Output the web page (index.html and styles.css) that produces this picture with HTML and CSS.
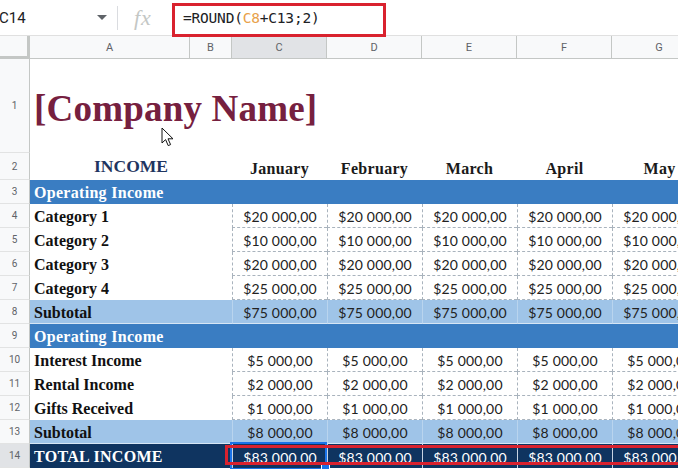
FILE: index.html
```html
<!DOCTYPE html>
<html>
<head>
<meta charset="utf-8">
<link rel="stylesheet" href="styles.css">
</head>
<body>
<div class="app">
  <div class="fbar">
    <div class="namebox"><span class="nb-text">C14</span><svg class="caret" width="10" height="6" viewBox="0 0 10 6"><path d="M0 0h10L5 5z" fill="#5f6368"/></svg></div>
    <div class="sep"></div>
    <div class="fx">fx</div>
    <div class="formula">=ROUND(<span class="ref">C8</span>+C13;2)</div>
  </div>
  <div class="sheet">
    <!-- header row -->
    <div class="corner"></div>
    <div class="ch">A</div><div class="ch">B</div><div class="ch ch-sel">C</div><div class="ch">D</div><div class="ch">E</div><div class="ch">F</div><div class="ch">G</div>
    <!-- row 1 -->
    <div class="rh">1</div>
    <div class="title">[Company Name]</div>
    <!-- row 2 -->
    <div class="rh">2</div>
    <div class="income">INCOME</div>
    <div class="month">January</div><div class="month">February</div><div class="month">March</div><div class="month">April</div><div class="month">May</div>
    <!-- row 3 -->
    <div class="rh">3</div>
    <div class="section">Operating Income</div>
    <!-- row 4 -->
    <div class="rh">4</div>
    <div class="lbl">Category 1</div><div class="blank"></div>
    <div class="num">$20 000,00</div><div class="num">$20 000,00</div><div class="num">$20 000,00</div><div class="num">$20 000,00</div><div class="num">$20 000,00</div>
    <!-- row 5 -->
    <div class="rh">5</div>
    <div class="lbl">Category 2</div><div class="blank"></div>
    <div class="num">$10 000,00</div><div class="num">$10 000,00</div><div class="num">$10 000,00</div><div class="num">$10 000,00</div><div class="num">$10 000,00</div>
    <!-- row 6 -->
    <div class="rh">6</div>
    <div class="lbl">Category 3</div><div class="blank"></div>
    <div class="num">$20 000,00</div><div class="num">$20 000,00</div><div class="num">$20 000,00</div><div class="num">$20 000,00</div><div class="num">$20 000,00</div>
    <!-- row 7 -->
    <div class="rh">7</div>
    <div class="lbl">Category 4</div><div class="blank"></div>
    <div class="num">$25 000,00</div><div class="num">$25 000,00</div><div class="num">$25 000,00</div><div class="num">$25 000,00</div><div class="num">$25 000,00</div>
    <!-- row 8 -->
    <div class="rh">8</div>
    <div class="lbl sub">Subtotal</div><div class="blank sub"></div>
    <div class="num sub">$75 000,00</div><div class="num sub">$75 000,00</div><div class="num sub">$75 000,00</div><div class="num sub">$75 000,00</div><div class="num sub">$75 000,00</div>
    <!-- row 9 -->
    <div class="rh">9</div>
    <div class="section">Operating Income</div>
    <!-- row 10 -->
    <div class="rh">10</div>
    <div class="lbl">Interest Income</div><div class="blank"></div>
    <div class="num">$5 000,00</div><div class="num">$5 000,00</div><div class="num">$5 000,00</div><div class="num">$5 000,00</div><div class="num">$5 000,00</div>
    <!-- row 11 -->
    <div class="rh">11</div>
    <div class="lbl">Rental Income</div><div class="blank"></div>
    <div class="num">$2 000,00</div><div class="num">$2 000,00</div><div class="num">$2 000,00</div><div class="num">$2 000,00</div><div class="num">$2 000,00</div>
    <!-- row 12 -->
    <div class="rh">12</div>
    <div class="lbl">Gifts Received</div><div class="blank"></div>
    <div class="num">$1 000,00</div><div class="num">$1 000,00</div><div class="num">$1 000,00</div><div class="num">$1 000,00</div><div class="num">$1 000,00</div>
    <!-- row 13 -->
    <div class="rh">13</div>
    <div class="lbl sub">Subtotal</div><div class="blank sub"></div>
    <div class="num sub">$8 000,00</div><div class="num sub">$8 000,00</div><div class="num sub">$8 000,00</div><div class="num sub">$8 000,00</div><div class="num sub">$8 000,00</div>
    <!-- row 14 -->
    <div class="rh rh-sel">14</div>
    <div class="lbl total">TOTAL INCOME</div><div class="blank total"></div>
    <div class="num total">$83 000,00</div><div class="num total">$83 000,00</div><div class="num total">$83 000,00</div><div class="num total">$83 000,00</div><div class="num total">$83 000,00</div>
  </div>

  <div class="mark mark-formula"></div>
  <div class="selection"></div>
  <div class="handle"></div>
  <div class="mark mark-total"></div>
  <svg class="cursor" width="13" height="20" viewBox="0 0 13 20"><path d="M1 1v15l3.6-3.4 2.6 6 2.4-1-2.6-5.8H12z" fill="#fff" stroke="#111" stroke-width="1" stroke-linejoin="round"/></svg>
</div>
</body>
</html>
```

FILE: styles.css
```css
html, body {
  margin: 0;
  padding: 0;
  background: #fff;
  overflow: hidden;
}
.app {
  position: relative;
  width: 678px;
  height: 469px;
  overflow: hidden;
  font-family: Roboto, "Liberation Sans", sans-serif;
}
.fbar {
  height: 36px;
  display: flex;
  align-items: center;
  border-bottom: 1px solid #e0e0e0;
  box-sizing: border-box;
  background: #fff;
}
.namebox {
  width: 117px;
  display: flex;
  align-items: center;
  justify-content: space-between;
  padding: 0 10px 0 0;
  box-sizing: border-box;
  font-size: 15px;
  color: #202124;
}
.nb-text { margin-left: -1px; }
.sep {
  width: 1px;
  height: 24px;
  background: #dadce0;
}
.fx {
  width: 55px;
  padding-left: 16px;
  box-sizing: border-box;
  font-family: "Liberation Serif", serif;
  font-style: italic;
  font-size: 22px;
  color: #c4c7c5;
  letter-spacing: 1px;
}
.formula {
  padding-left: 10px;
  font-family: "DejaVu Sans Mono", monospace;
  font-size: 14.5px;
  color: #202124;
  letter-spacing: -0.2px;
}
.ref { color: #e8a14a; }

.sheet {
  display: grid;
  grid-template-columns: 30px 160px 42px 95px 95px 95px 95px 95px;
  grid-template-rows: 23px 94px 27px repeat(12, 24px);
  width: 707px;
}
.sheet > div { box-sizing: border-box; min-width: 0; }
.corner {
  background: #f8f9fa;
  border-right: 3px solid #c4c7c5;
  border-bottom: 3px solid #c4c7c5;
}
.ch {
  background: #f8f9fa;
  border-right: 1px solid #c4c7c5;
  border-bottom: 1px solid #c4c7c5;
  font-size: 11px;
  color: #5f6368;
  display: flex;
  align-items: center;
  justify-content: center;
}
.ch-sel { background: #e1e3e6; }
.rh {
  grid-column: 1;
  background: #f8f9fa;
  border-right: 1px solid #c4c7c5;
  border-bottom: 1px solid #e2e3e3;
  font-size: 10px;
  color: #5f6368;
  display: flex;
  align-items: center;
  justify-content: center;
}
.rh-sel { background: #e1e3e6; }

.title {
  grid-column: 2 / 9;
  display: flex;
  align-items: center;
  padding: 4px 0 0 4px;
  font-family: "Liberation Serif", serif;
  font-weight: bold;
  font-size: 37px;
  color: #76203f;
  letter-spacing: 0.2px;
}
.income {
  grid-column: 2 / 4;
  display: flex;
  align-items: flex-end;
  justify-content: center;
  padding-bottom: 3px;
  font-family: "Liberation Serif", serif;
  font-weight: bold;
  font-size: 17.5px;
  color: #1f3560;
}
.month {
  display: flex;
  align-items: flex-end;
  justify-content: center;
  padding-bottom: 2px;
  font-family: "Liberation Serif", serif;
  font-weight: bold;
  font-size: 16px;
  color: #1a1a1a;
  letter-spacing: 0.3px;
}
.section {
  grid-column: 2 / 9;
  background: #3a7dc2;
  color: #fff;
  display: flex;
  align-items: center;
  padding: 2px 0 0 4px;
  font-family: "Liberation Serif", serif;
  font-weight: bold;
  font-size: 16px;
  letter-spacing: 0.3px;
}
.lbl {
  display: flex;
  align-items: center;
  padding: 2px 0 0 4px;
  font-family: "Liberation Serif", serif;
  font-weight: bold;
  font-size: 16px;
  color: #111;
  white-space: nowrap;
}
.num {
  display: flex;
  align-items: center;
  justify-content: center;
  padding-top: 2px;
  font-family: Lato, "Liberation Sans", sans-serif;
  font-size: 14px;
  letter-spacing: 0.2px;
  color: #222;
  border-left: 1px dashed #a9b3bd;
  border-bottom: 1px dashed #a9b3bd;
  white-space: nowrap;
}
.sub {
  background: #9fc4e8;
  border-bottom: 1px solid #d6e6f5;
}
.num.sub {
  border-left: 1px solid #b9d4ee;
  border-bottom: 1px solid #d6e6f5;
}
.total {
  background: #0f3460;
  color: #fff;
  border-bottom: none;
}
.num.total {
  border-left: 1px solid #c7d3e2;
  border-bottom: none;
  color: #fff;
}
.lbl.total { letter-spacing: 0.3px; }

.mark {
  position: absolute;
  border: 3px solid #d9222e;
  box-sizing: border-box;
}
.mark-formula {
  left: 172px;
  top: 3px;
  width: 214px;
  height: 34px;
}
.mark-total {
  left: 225px;
  top: 445px;
  width: 470px;
  height: 20px;
}
.selection {
  position: absolute;
  left: 230px;
  top: 442px;
  width: 97px;
  height: 28px;
  border: 2px solid #1a73e8;
  box-sizing: border-box;
}
.handle {
  position: absolute;
  left: 321px;
  top: 462px;
  width: 7px;
  height: 7px;
  background: #1a73e8;
  border: 1px solid #fff;
}
.cursor {
  position: absolute;
  left: 161px;
  top: 127px;
}
```
